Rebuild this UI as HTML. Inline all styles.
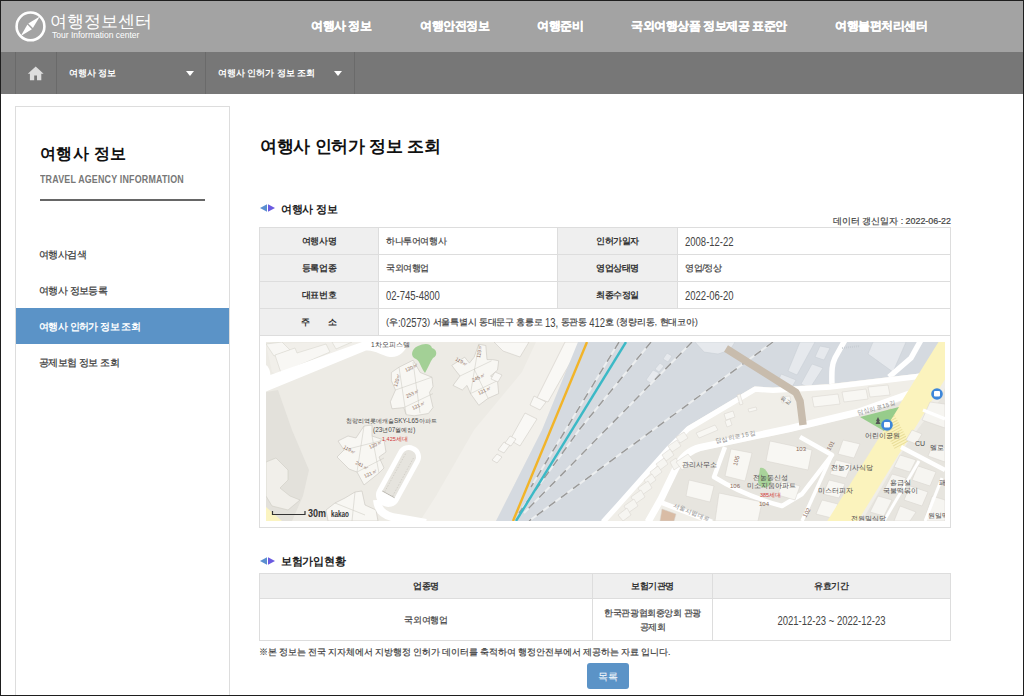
<!DOCTYPE html>
<html><head><meta charset="utf-8">
<style>
*{box-sizing:border-box;margin:0;padding:0}
html,body{width:1024px;height:696px;overflow:hidden;background:#fff}
body{font-family:"Liberation Sans",sans-serif;position:relative;color:#333}
.sm,td,.note{-webkit-text-stroke:0.2px currentColor}
.n{-webkit-text-stroke:0}
.frame{position:absolute;left:0;top:0;width:1024px;height:696px;border:1px solid #1e1e1e;pointer-events:none;z-index:50}
.abs{position:absolute;white-space:nowrap}
#top{position:absolute;left:0;top:0;width:1024px;height:52px;background:#a3a3a3}
#sub{position:absolute;left:0;top:52px;width:1024px;height:42px;background:#777}
.vl{position:absolute;top:52px;width:1px;height:42px;background:#6a6a6a}
.nav{position:absolute;top:17px;font-size:11.8px;font-weight:bold;color:#fff;line-height:18px;letter-spacing:-0.45px;-webkit-text-stroke:0.3px #fff}
.crumb{position:absolute;top:66px;font-size:8.7px;font-weight:bold;color:#fff;line-height:14px}
.tri{position:absolute;top:71px;width:0;height:0;border-left:4px solid transparent;border-right:4px solid transparent;border-top:5px solid #fff}
#side{position:absolute;left:15px;top:106px;width:215px;height:600px;border:1px solid #ddd}
.sm{position:absolute;left:39px;font-size:10px;letter-spacing:-0.55px;color:#333;line-height:14px}
.ttl{position:absolute;font-weight:bold;color:#111}
.sec{position:absolute;left:260px;font-size:11px;letter-spacing:-0.3px;font-weight:bold;color:#222}
table{border-collapse:collapse;position:absolute;table-layout:fixed}
.p{font-size:9.5px;letter-spacing:0;-webkit-text-stroke:0}
.n{font-size:9.5px;letter-spacing:0;display:inline-block;transform:scaleY(1.3);transform-origin:0 4px}
td,th{border:1px solid #ddd;font-size:9px;letter-spacing:-0.4px;color:#444;height:27px;padding:0 7px;line-height:14px}
th{background:#efefef;color:#333;font-weight:bold;text-align:center}
</style></head><body>
<div id="top"></div>
<div id="sub"></div>
<div class="vl" style="left:15px"></div>
<div class="vl" style="left:56px"></div>
<div class="vl" style="left:205px"></div>
<div class="vl" style="left:354px"></div>

<!-- logo -->
<svg class="abs" style="left:10px;top:8px" width="40" height="38" viewBox="0 0 40 38">
 <circle cx="20.5" cy="18.4" r="13.9" fill="none" stroke="#fff" stroke-width="2.6"/>
 <path d="M29.8 8.6 L18.3 15.6 L22.9 20.1 Z" fill="#fff"/>
 <path d="M10.8 28 L17.4 16.6 L21.9 21.2 Z" fill="#fff"/>
</svg>
<div class="abs" style="left:50px;top:10px;font-size:17px;color:#fff;line-height:24px;letter-spacing:0px">여행정보센터</div>
<div class="abs" style="left:52px;top:30px;font-size:8.5px;color:#fff;line-height:10px;letter-spacing:0px">Tour Information center</div>

<div class="nav" style="left:311px">여행사 정보</div>
<div class="nav" style="left:420px">여행안전정보</div>
<div class="nav" style="left:537px">여행준비</div>
<div class="nav" style="left:631px">국외여행상품 정보제공 표준안</div>
<div class="nav" style="left:835px">여행불편처리센터</div>

<!-- home -->
<svg class="abs" style="left:27px;top:65px" width="18" height="16" viewBox="0 0 18 16">
 <path d="M0.8 8.7 L8.7 1.5 L16.6 8.7 L14.3 8.7 L14.3 15.2 L10 15.2 L10 10.5 L7.2 10.5 L7.2 15.2 L2.9 15.2 L2.9 8.7 Z" fill="#ddd"/>
</svg>
<div class="crumb" style="left:69px">여행사 정보</div>
<div class="tri" style="left:186px"></div>
<div class="crumb" style="left:218px">여행사 인허가 정보 조회</div>
<div class="tri" style="left:334px"></div>

<!-- sidebar -->
<div id="side"></div>
<div class="ttl" style="left:40px;top:143px;font-size:16px;line-height:22px;letter-spacing:0.4px">여행사 정보</div>
<div class="abs" style="left:40px;top:174px;font-size:10px;font-weight:bold;color:#777;line-height:12px;letter-spacing:0.2px;transform:scaleX(0.89);transform-origin:0 0">TRAVEL AGENCY INFORMATION</div>
<div class="abs" style="left:40px;top:199px;width:165px;height:2px;background:#666"></div>
<div class="sm" style="top:248px">여행사검색</div>
<div class="sm" style="top:284px">여행사 정보등록</div>
<div class="abs" style="left:16px;top:308px;width:213px;height:36px;background:#5b93c7"></div>
<div class="sm" style="top:320px;color:#fff;font-weight:bold;-webkit-text-stroke:0">여행사 인허가 정보 조회</div>
<div class="sm" style="top:356px">공제보험 정보 조회</div>

<!-- main -->
<div class="ttl" style="left:260px;top:135px;font-size:17px;line-height:24px;letter-spacing:-0.3px">여행사 인허가 정보 조회</div>

<svg class="abs" style="left:259px;top:204px" width="17" height="8" viewBox="0 0 17 8"><path d="M1 4 L8 0.3 L8 7.7Z" fill="#5b8fd0"/><path d="M16 4 L9 0.3 L9 7.7Z" fill="#6a5ae0"/></svg>
<div class="sec" style="left:281px;top:201px;line-height:16px">여행사 정보</div>
<div class="abs note" style="right:73px;top:214px;font-size:8.9px;color:#444;line-height:14px">데이터 갱신일자 : 2022-06-22</div>

<table style="left:259px;top:227px;width:691px">
<colgroup><col style="width:119px"><col style="width:179px"><col style="width:120px"><col style="width:273px"></colgroup>
<tr><th>여행사명</th><td>하나투어여행사</td><th>인허가일자</th><td><span class="n">2008-12-22</span></td></tr>
<tr><th>등록업종</th><td>국외여행업</td><th>영업상태명</th><td>영업/정상</td></tr>
<tr><th>대표번호</th><td><span class="n">02-745-4800</span></td><th>최종수정일</th><td><span class="n">2022-06-20</span></td></tr>
<tr><th>주 &nbsp; &nbsp; &nbsp; &nbsp; 소</th><td colspan="3" style="letter-spacing:-0.2px"><span class="p">(</span>우<span class="n">:02573</span><span class="p">)</span> 서울특별시 동대문구 홍릉로 <span class="n">13,</span> 동관동 <span class="n">412</span>호 <span class="p">(</span>청량리동<span class="p">,</span> 현대코아<span class="p">)</span></td></tr>
<tr><td colspan="4" style="height:192px;padding:0"></td></tr>
</table>
<!--MAP-->
<svg class="abs" style="left:266px;top:342px" width="679" height="179" viewBox="266 342 679 179" font-family="Liberation Sans, sans-serif">
<rect x="266" y="342" width="679" height="179" fill="#edebe5"/>
<!-- darker left band -->
<path d="M266 392 L278 390 L292 430 L309 470 L303 496 L292 521 L266 521 Z" fill="#e3e1db"/>
<!-- lighter land near rail -->
<path d="M440 342 L578 342 L542 430 L496 521 L420 521 L436 496 L474 430 L522 372 L536 342 Z" fill="#f2f0eb"/>
<!-- top-left blocks -->
<path d="M266 344 L340 342 L362 342 L279 375 L272 372 Z" fill="#f1efea"/>
<path d="M266 344 L282 342 L290 350 L274 356 Z" fill="#f8f7f4" stroke="#d9d6cf" stroke-width="0.6"/>
<path d="M275 355 L295 348 L297 353 L326 344 L330 352 L281 373 Z" fill="#f8f7f4" stroke="#d9d6cf" stroke-width="0.6"/>
<path d="M332 342 L352 342 L336 349 Z" fill="#f8f7f4" stroke="#d9d6cf" stroke-width="0.6"/>
<!-- top-left white road -->
<path d="M266 376.5 L362 342 L408.7 342 C406 352 398 358 390 357 C382 356 376 350 366 350.5 L266 391.6 Z" fill="#fff"/>
<path d="M266 365 C270 368 272 376 269 382 L266 384 Z" fill="#fff"/>
<!-- park green top -->
<path d="M418 346 C424 343 431 343 432 348 C437 349 438 356 433 358 C430 362 428 368 425 373 C421 368 420 361 416 359 C410 357 411 349 418 346 Z" fill="#a3d096"/>
<!-- apartment B -->
<g fill="#f8f7f3" stroke="#c9c6bf" stroke-width="0.6">
<path d="M391.4 372.5 L399 367.2 L413.1 360.2 L420.2 372.5 L431.9 377.2 L433 386.5 L429.5 392.4 L433 407.6 L428.4 413.5 L414.3 415.8 L406.1 414.7 L403.8 407.6 L392 408.8 L390.3 401.8 L395.5 390 L391.4 380.7 Z"/>
<path d="M395.5 390 L431.9 377.2 M403.8 407.6 L433 393.6 M399 367.2 L406 414 M413 362 L420 413" fill="none" stroke-width="0.5"/>
</g>
<!-- apartment A -->
<g fill="#f8f7f3" stroke="#c9c6bf" stroke-width="0.6">
<path d="M451.8 365.4 L464.7 357.2 L469.4 363.1 L474.1 357.2 L478.8 344.3 L485.8 345.5 L487 359.6 L492.8 359.6 L498.7 360.8 L497.5 370.1 L490.5 376 L497.5 380.7 L498.7 393.6 L488.1 398.3 L478.8 405.3 L470.5 393.6 L467 385.4 L462.3 390 L453 385.4 L460 376 L455.3 370.1 Z"/>
<path d="M460 376 L491.6 360.8 M470.5 393.6 L497.5 380.7 M478.8 344.3 L470.5 393.6 M474.1 369 L488.1 398.3" fill="none" stroke-width="0.5"/>
</g>
<!-- apartment C -->
<g fill="#f8f7f3" stroke="#c9c6bf" stroke-width="0.6">
<path d="M338 441 L348 436 L356 438 L364 426 L372 425 L372 436 L384 440 L386 452 L379 457 L384 468 L379 473 L364 485 L357 472 L349 469 L337 457 L344 450 Z"/>
<path d="M344 450 L384 440 M357 472 L384 458 M364 426 L357 472 M372 436 L379 473" fill="none" stroke-width="0.5"/>
</g>
<!-- apartment D -->
<g fill="#f8f7f3" stroke="#c9c6bf" stroke-width="0.6">
<path d="M326 510 L335 503 L345 498 L355 492 L362 491 L365 505 L376 510 L378 521 L328 521 Z"/>
<path d="M335 503 L365 515 M355 492 L352 521" fill="none" stroke-width="0.5"/>
</g>
<!-- left buildings -->
<path d="M266 462 L276 458 L288 470 L288 480 L280 488 L290 496 L300 500 L288 510 L272 506 L266 496 Z" fill="#f1efea" stroke="#cfccc5" stroke-width="0.6"/>
<!-- yellow corner bottom-left -->
<path d="M266 507 L282 521 L266 521 Z" fill="#fbf4c1"/>
<!-- oval track -->
<path d="M377 500 C378 512 386 517 398 518 L426 523" fill="none" stroke="#fff" stroke-width="8"/>
<g transform="translate(2.5 0) rotate(28.7 396 476)">
<rect x="386.5" y="445" width="19" height="62" rx="9" fill="#e6e4de" stroke="#fff" stroke-width="5"/>
<path d="M391.5 453 L391.5 497 M400.5 453 L400.5 497" stroke="#c9c6bf" stroke-width="0.6" stroke-dasharray="1.5 1.5"/>
<path d="M389 497 L403 497" stroke="#b5b2ab" stroke-width="0.8"/>
<rect x="388.5" y="497.5" width="15" height="8" fill="#fff"/>
</g>
<!-- buildings near rail -->
<g fill="#f9f8f5" stroke="#d0cdc6" stroke-width="0.6">
<path d="M565 342 L582 342 L548 402 L537 398 Z"/>
<path d="M534 396 L546 402 L540 410 L530 405 Z"/>
<path d="M525 413 L537 419 L520 446 L510 440 Z"/>
<path d="M494 342 L529 342 L520 357 L503 351 Z"/>
<path d="M504 442 L510 445 L504 453 L498 450 Z"/>
<path d="M497 454 L502 457 L497 463 L492 460 Z"/>
<path d="M510 436 L516 439 L511 446 L505 443 Z"/>
<path d="M495 372 L502 375 L498 382 L491 379 Z"/>
</g>
<!-- blue-gray rail area -->
<path d="M578 342 L940 342 L924 373 L830 384 L773 387.6 L754.4 386.4 L687.6 426.3 L670 445 L619 504 L605 521 L496 521 L542 430 Z" fill="#d5dae0"/>
<!-- blue area buildings -->
<g fill="#e6e9ed" stroke="#c6ccd2" stroke-width="0.5">
<path d="M800 342 L815 342 L797 375 L788 371 Z"/>
<path d="M820 346 L830 348 L824 360 L815 357 Z"/>
<path d="M812 364 L823 368 L810 388 L801 384 Z"/>
<path d="M781 374 L796 380 L792 387 L778 382 Z"/>
<path d="M873 342 L906 342 L893 372 L868 354 Z"/>
<path d="M695 342 L735 342 L730 350 L718 354 L704 352 Z"/>
<path d="M667 353 L672 356 L668 362 L663 359 Z"/>
<path d="M660 363 L664 366 L659 372 L655 369 Z"/>
<path d="M653 370 L659 373 L652 384 L646 380 Z"/>
<path d="M942 342 L945 342 L945 348 Z"/>
</g>
<path d="M845 340 L835 358 C832 364 831.5 370 832 386" fill="none" stroke="#fff" stroke-width="5.5"/>
<path d="M921 340 L911 358 L889 377" fill="none" stroke="#fff" stroke-width="5.5" stroke-linejoin="round"/>
<path d="M842 348 L860 346" stroke="#c6ccd2" stroke-width="2" stroke-dasharray="0.8 1.2"/>
<!-- rail lines -->
<g fill="none">
<path d="M619 342 L531 487" stroke="#eceeef" stroke-width="2"/>
<path d="M619 342 L531 487" stroke="#9a9a9a" stroke-width="1.5" stroke-dasharray="8 7"/>
<path d="M651 342 L579 430 L519 513" stroke="#eceeef" stroke-width="2"/>
<path d="M651 342 L579 430 L519 513" stroke="#9a9a9a" stroke-width="1.5" stroke-dasharray="8 7"/>
<path d="M692 342 L524 513" stroke="#eceeef" stroke-width="2"/>
<path d="M692 342 L524 513" stroke="#9a9a9a" stroke-width="1.5" stroke-dasharray="8 7"/>
<path d="M773 342 L529 521" stroke="#eceeef" stroke-width="2"/>
<path d="M773 342 L529 521" stroke="#9a9a9a" stroke-width="1.5" stroke-dasharray="8 7"/>
<path d="M587 342 L513 521" stroke="#f2b428" stroke-width="2.4"/>
<path d="M626 342 L516 521" stroke="#3cb9c6" stroke-width="2.4"/>
</g>
<!-- land band -->
<path d="M945 368 L924 373 L830 384 L773 387.6 L754.4 386.4 L687.6 426.3 L670 445 L619 504 L605 521 L945 521 Z" fill="#f0eee8"/>
<!-- white road along blue edge -->
<path d="M603 522 L617.5 506 L669 448 L688 429 L755 389.2 L773 390.3 L830 387 L922 376 L945 372" fill="none" stroke="#fff" stroke-width="5.3" stroke-linejoin="round"/>
<!-- land band buildings -->
<g fill="#f8f7f3" stroke="#d6d3cc" stroke-width="0.5">
<path d="M696 433 L715 425 L718 430 L699 438 Z"/>
<path d="M724 414 L733 411 L735 417 L726 420 Z"/>
<path d="M725 421 L730 419 L732 425 L727 427 Z"/>
<path d="M737 395 L740 394 L743 404 L740 405 Z"/>
<path d="M748 409 L756 407 L757 410 L749 412 Z"/>
<path d="M781 397 L790 396 L791 402 L782 403 Z"/>
<path d="M812 397 L838 394 L840 404 L814 407 Z"/>
<path d="M842 392 L866 389 L868 399 L844 402 Z"/>
<path d="M868 387 L888 385 L890 395 L870 397 Z"/>
</g>
<!-- complex land -->
<path d="M680 462 L700 451 L790 432 L857 416 L906 400 L880 442 L862 480 L842 521 L712 521 L664 502 Z" fill="#e7e5df"/>
<!-- 답십리로15길 road -->
<path d="M648 522 L661 499 L676 468 C682 456 690 450 700 447.5 L790 428.5 L857 412.5 L912 393" fill="none" stroke="#fff" stroke-width="7"/>
<!-- small buildings column along road -->
<g fill="#f6f5f1" stroke="#d6d3cc" stroke-width="0.5">
<path d="M676 437 L684 432 L688 438 L680 443 Z"/>
<path d="M668 446 L677 440 L681 446 L672 452 Z"/>
<path d="M662 455 L670 449 L674 455 L666 461 Z"/>
<path d="M656 464 L664 458 L668 464 L660 470 Z"/>
<path d="M650 472 L658 466 L662 472 L654 478 Z"/>
<path d="M644 480 L652 474 L656 480 L648 486 Z"/>
<path d="M638 488 L648 481 L652 488 L642 495 Z"/>
<path d="M631 497 L641 490 L645 497 L635 504 Z"/>
<path d="M624 506 L634 499 L638 506 L628 513 Z"/>
<path d="M618 515 L627 508 L631 515 L623 521 Z"/>
<path d="M670 462 L676 458 L680 466 L674 470 Z"/>
</g>
<!-- inner roads -->
<path d="M725 447 L714 477 C735 490 760 500 782 506 L802 494 L832 455 L800 437" fill="none" stroke="#fff" stroke-width="4.5" stroke-linejoin="round"/>
<path d="M660 502 L712 522" fill="none" stroke="#fff" stroke-width="5"/>
<path d="M832 455 L802 521" fill="none" stroke="#fff" stroke-width="3.5"/>
<!-- complex buildings -->
<g fill="#f8f7f3" stroke="#d6d3cc" stroke-width="0.5">
<path d="M770 441 L812 450 L808 470 L766 461 Z"/>
<path d="M731 449 L752 453 L745 481 L725 476 Z"/>
<path d="M689 480 L714 486 L710 502 L686 496 Z"/>
<path d="M719 493 L762 502 L758 521 L715 521 Z"/>
<path d="M782 481 L800 486 L795 500 L778 495 Z"/>
<path d="M676 462 L688 454 L694 462 L682 470 Z"/>
<path d="M843 440 L860 444 L854 458 L838 454 Z"/>
<path d="M836 460 L852 464 L846 478 L830 474 Z"/>
<path d="M829 480 L845 484 L839 498 L823 494 Z"/>
<path d="M822 500 L838 504 L832 518 L816 514 Z"/>
<path d="M662 509 L676 514 L674 521 L660 521 Z" fill="#d9bca5"/>
</g>
<path d="M760 468 C765 466 769 474 771 482 C769 489 760 490 758 482 Z" fill="#a9d39a"/>
<!-- brown bridge -->
<path d="M726 348.5 L796 392.5 L800 401 L803 425" fill="none" stroke="#c8bcad" stroke-width="7.5" stroke-linejoin="round"/>
<!-- yellow road -->
<path d="M938.5 342 L968 342 L857.8 521 L827.3 521 Z" fill="#fbf3bd"/>
<path d="M884 412 L902 446" stroke="#e2d58a" stroke-width="16" stroke-dasharray="1 1.6" opacity="0.7"/>
<!-- right of yellow road -->
<path d="M945 388 L940 400 L908 442 L862 521 L945 521 Z" fill="#e7e5df"/>
<g fill="#f6f5f1" stroke="#d6d3cc" stroke-width="0.5">
<path d="M930 402 L945 404 L945 428 L922 420 Z"/>
<path d="M912 430 L922 434 L916 444 L906 440 Z"/>
<path d="M933 444 L945 448 L945 462 L928 456 Z"/>
<path d="M900 455 L916 460 L910 472 L894 467 Z"/>
<path d="M892 474 L906 478 L898 494 L884 490 Z"/>
<path d="M918 466 L936 472 L930 486 L912 480 Z"/>
<path d="M910 486 L928 492 L922 506 L904 500 Z"/>
<path d="M878 496 L892 500 L884 516 L870 512 Z"/>
<path d="M900 506 L916 512 L910 521 L894 521 Z"/>
<path d="M932 496 L945 500 L945 521 L924 521 Z"/>
</g>
<g fill="none" stroke="#fff">
<path d="M945 419 L923 410" stroke-width="3.5"/>
<path d="M901 447 L945 470" stroke-width="4.5"/>
<path d="M919 461 L884 521" stroke-width="3"/>
<path d="M942 478 L925 521" stroke-width="3"/>
</g>
<!-- park triangle -->
<path d="M860 417 L899 407 L884 431 Z" fill="#97cc8b"/>
<path d="M878 417 L876 421 L880 421 Z" fill="#555"/><path d="M878 419 L875.5 424 L880.5 424 Z" fill="#555"/>
<!-- bus icons -->
<circle cx="937" cy="394" r="5.8" fill="#3d87d9"/>
<rect x="934" y="391" width="6" height="5.5" rx="1" fill="#fff"/>
<circle cx="887" cy="425" r="5.8" fill="#3d87d9"/>
<rect x="884" y="422" width="6" height="5.5" rx="1" fill="#fff"/>
<!-- labels -->
<g fill="#888" font-size="6">
<text x="716" y="443" transform="rotate(-12 716 443)" letter-spacing="0.6">답십리로15길</text>
<text x="858" y="415" transform="rotate(-15 858 415)" letter-spacing="0.4">답십리로15길</text>
<text x="673" y="507" transform="rotate(22 673 507)" letter-spacing="0.5">서울시립대로</text>
<text x="780" y="399" transform="rotate(35 780 399)" font-size="5.5" fill="#666">육교</text>
</g>
<g fill="#8a6a5a" font-size="6">
<text x="737" y="466" transform="rotate(-75 737 466)">105</text>
<text x="830" y="451" transform="rotate(-60 830 451)">101</text>
<text x="806" y="518" transform="rotate(-60 806 518)">102</text>
</g>
<g fill="#484848" font-size="6.5">
<text x="371" y="347">1차오피스텔</text>
<text x="346" y="423" font-size="6.3">청량리역롯데캐슬SKY-L65아파트</text>
<text x="373" y="432" font-size="6.4">(23년07월예정)</text>
<text x="382" y="441" font-size="5.5" fill="#d23a3a">1,425세대</text>
<text x="682" y="467" font-size="7">관리사무소</text>
<text x="753" y="480" font-size="7">전농동신성</text>
<text x="747" y="488" font-size="7">미소지움아파트</text>
<text x="760" y="497" font-size="5.5" fill="#d23a3a">385세대</text>
<text x="831" y="470" font-size="7">전농기사식당</text>
<text x="818" y="493" font-size="7">미스터피자</text>
<text x="865" y="438" font-size="7">어린이공원</text>
<text x="915" y="446" font-size="7">CU</text>
<text x="930" y="450" font-size="7">멜로</text>
<text x="890" y="485" font-size="7">용급실</text>
<text x="883" y="493" font-size="7">국물떡볶이</text>
<text x="851" y="521" font-size="7">전원밀식당</text>
<text x="928" y="518" font-size="7">원일떡</text>
<text x="939" y="485" font-size="7">패션</text>
</g>
<g fill="#8a6a5a" font-size="5">
<text x="397" y="387" transform="rotate(-75 397 387)">120㎡</text>
<text x="406" y="372" transform="rotate(-25 406 372)">120㎡</text>
<text x="407" y="398" transform="rotate(-25 407 398)">253㎡</text>
<text x="413" y="410" transform="rotate(-25 413 410)">121㎡</text>
<text x="455" y="360" transform="rotate(30 455 360)">119㎡</text>
<text x="480" y="358" transform="rotate(-80 480 358)">119㎡</text>
<text x="473" y="382" transform="rotate(-25 473 382)">245㎡</text>
<text x="479" y="395" transform="rotate(-25 479 395)">121㎡</text>
<text x="343" y="448" transform="rotate(30 343 448)">119㎡</text>
<text x="370" y="449" transform="rotate(-25 370 449)">120㎡</text>
<text x="355" y="464" transform="rotate(25 355 464)">241㎡</text>
<text x="365" y="478" transform="rotate(-25 365 478)">121㎡</text>
<text x="796" y="451" font-size="6">103</text>
<text x="730" y="488" font-size="6">106</text>
<text x="759" y="506" font-size="6">104</text>
</g>
<!-- scale bar -->
<path d="M272.5 511 L272.5 514.5 L305 514.5 L305 511" fill="none" stroke="#333" stroke-width="1.2"/>
<text x="308" y="517" font-size="10.5" font-weight="bold" fill="#333" textLength="18" lengthAdjust="spacingAndGlyphs">30m</text>
<text x="331" y="516.5" font-size="8.5" font-weight="bold" fill="#333" textLength="18" lengthAdjust="spacingAndGlyphs">kakao</text>
</svg>
<!--/MAP-->

<svg class="abs" style="left:259px;top:557px" width="17" height="8" viewBox="0 0 17 8"><path d="M1 4 L8 0.3 L8 7.7Z" fill="#5b8fd0"/><path d="M16 4 L9 0.3 L9 7.7Z" fill="#6a5ae0"/></svg>
<div class="sec" style="left:281px;top:553px;line-height:16px">보험가입현황</div>
<table style="left:259px;top:573px;width:691px">
<colgroup><col style="width:333px"><col style="width:120px"><col style="width:238px"></colgroup>
<tr><th style="height:25px">업종명</th><th style="height:25px">보험기관명</th><th style="height:25px">유효기간</th></tr>
<tr><td style="text-align:center;height:42px">국외여행업</td><td style="text-align:center;height:42px;padding:0 4px">한국관광협회중앙회 관광<br>공제회</td><td style="text-align:center;height:42px"><span class="n">2021-12-23 ~ 2022-12-23</span></td></tr>
</table>
<div class="abs note" style="left:259px;top:645px;font-size:8.6px;color:#444;line-height:14px;letter-spacing:-0.08px">※본 정보는 전국 지자체에서 지방행정 인허가 데이터를 축적하여 행정안전부에서 제공하는 자료 입니다.</div>
<div class="abs" style="left:587px;top:663px;width:42px;height:26px;background:#5b93c7;border-radius:3px;color:#fff;font-size:9.6px;text-align:center;line-height:28px">목록</div>

<div class="frame"></div>
</body></html>
